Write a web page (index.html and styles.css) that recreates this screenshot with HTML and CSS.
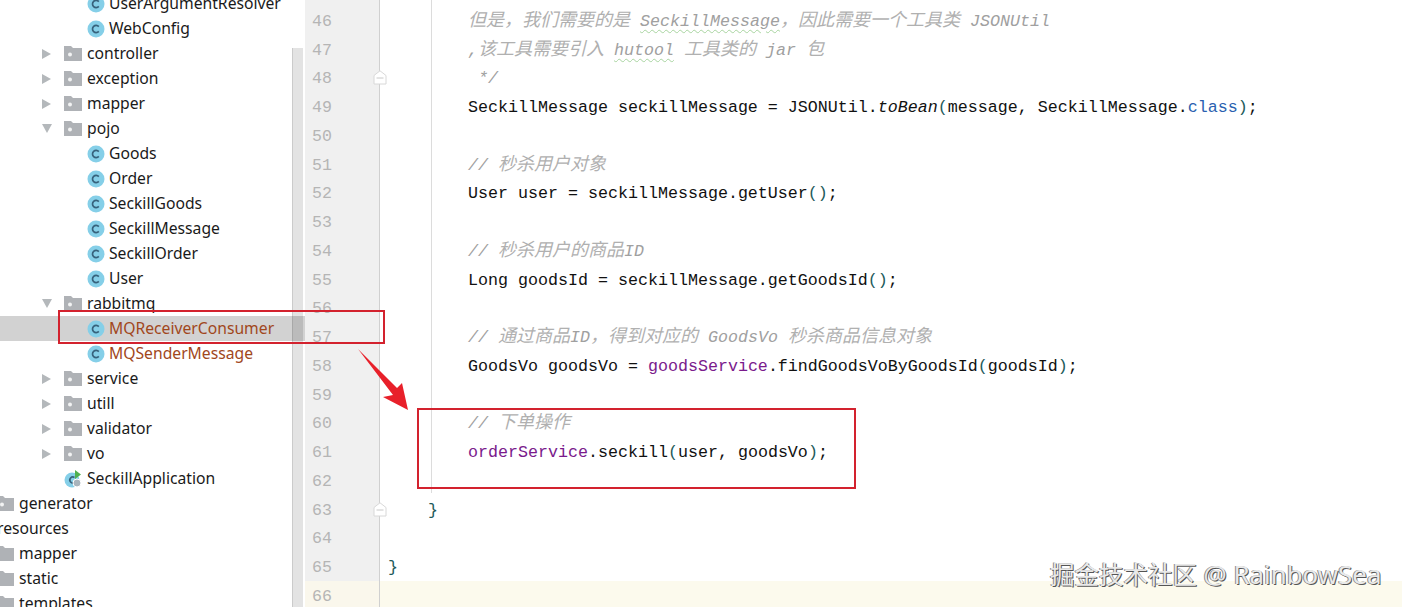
FILE: index.html
```html
<!DOCTYPE html>
<html lang="zh">
<head>
<meta charset="utf-8">
<title>Seckill</title>
<link rel="stylesheet" href="styles.css">
</head>
<body>
<svg class="defs" aria-hidden="true">
  <symbol id="i-cls" viewBox="0 0 18 18"><circle class="c-bg" cx="9" cy="9" r="8.500"/><path class="c-fg" d="M11.800 6.600A3.600 3.600 0 1 0 11.800 11.400"/></symbol>
  <symbol id="i-dir" viewBox="0 0 18 15"><path class="d-bg" d="M0 0h7l2 2h9v13H0z"/><circle class="d-fg" cx="6" cy="8.500" r="2"/></symbol>
  <symbol id="i-dir2" viewBox="0 0 18 15"><path class="d-bg" d="M0 0h7l2 2h9v13H0z"/></symbol>
</svg>
<div class="ide">
  <aside class="tree">
    <div class="tree-list">
      <div class="row d3"><svg class="cls"><use href="#i-cls"/></svg><span>UserArgumentResolver</span></div>
      <div class="row d3"><svg class="cls"><use href="#i-cls"/></svg><span>WebConfig</span></div>
      <div class="row d2"><i class="arrow"></i><svg class="dir"><use href="#i-dir"/></svg><span>controller</span></div>
      <div class="row d2"><i class="arrow"></i><svg class="dir"><use href="#i-dir"/></svg><span>exception</span></div>
      <div class="row d2"><i class="arrow"></i><svg class="dir"><use href="#i-dir"/></svg><span>mapper</span></div>
      <div class="row d2"><i class="arrow open"></i><svg class="dir"><use href="#i-dir"/></svg><span>pojo</span></div>
      <div class="row d3"><svg class="cls"><use href="#i-cls"/></svg><span>Goods</span></div>
      <div class="row d3"><svg class="cls"><use href="#i-cls"/></svg><span>Order</span></div>
      <div class="row d3"><svg class="cls"><use href="#i-cls"/></svg><span>SeckillGoods</span></div>
      <div class="row d3"><svg class="cls"><use href="#i-cls"/></svg><span>SeckillMessage</span></div>
      <div class="row d3"><svg class="cls"><use href="#i-cls"/></svg><span>SeckillOrder</span></div>
      <div class="row d3"><svg class="cls"><use href="#i-cls"/></svg><span>User</span></div>
      <div class="row d2"><i class="arrow open"></i><svg class="dir"><use href="#i-dir"/></svg><span>rabbitmq</span></div>
      <div class="row d3 sel mod"><svg class="cls"><use href="#i-cls"/></svg><span>MQReceiverConsumer</span></div>
      <div class="row d3 mod"><svg class="cls"><use href="#i-cls"/></svg><span>MQSenderMessage</span></div>
      <div class="row d2"><i class="arrow"></i><svg class="dir"><use href="#i-dir"/></svg><span>service</span></div>
      <div class="row d2"><i class="arrow"></i><svg class="dir"><use href="#i-dir"/></svg><span>utill</span></div>
      <div class="row d2"><i class="arrow"></i><svg class="dir"><use href="#i-dir"/></svg><span>validator</span></div>
      <div class="row d2"><i class="arrow"></i><svg class="dir"><use href="#i-dir"/></svg><span>vo</span></div>
      <div class="row d2b"><svg class="app" viewBox="0 0 18 18"><circle class="a1" cx="8" cy="10" r="7.500"/><path class="a2" d="M10.500 7.500A3 3 0 1 0 10.500 12.500"/><path class="a3" d="M11 0l6 4.500-6 4.500z"/><circle class="a4" cx="13" cy="13" r="4"/></svg><span>SeckillApplication</span></div>
      <div class="row d1"><svg class="dir"><use href="#i-dir"/></svg><span>generator</span></div>
      <div class="row d0"><span>resources</span></div>
      <div class="row d1"><svg class="dir"><use href="#i-dir2"/></svg><span>mapper</span></div>
      <div class="row d1"><svg class="dir"><use href="#i-dir2"/></svg><span>static</span></div>
      <div class="row d1"><svg class="dir"><use href="#i-dir2"/></svg><span>templates</span></div>
    </div>
    <div class="scrollbar"></div>
  </aside>
  <main class="editor">
    <div class="lines">
      <div class="ln"><span class="num">45</span><code class="code c8 cm"><span class="zh">获取到的是字符串类型的消息</span> String</code></div>
      <div class="ln"><span class="num">46</span><code class="code c8 cm"><span class="zh">但是，我们需要的是</span> <span class="typo">SeckillMessage</span><span class="zh">，因此需要一个工具类</span> JSONUtil</code></div>
      <div class="ln"><span class="num">47</span><code class="code c8 cm">,<span class="zh">该工具需要引入</span> <span class="typo">hutool</span> <span class="zh">工具类的</span> jar <span class="zh">包</span></code></div>
      <div class="ln"><span class="num">48</span><code class="code c8 cm"> */</code></div>
      <div class="ln"><span class="num">49</span><code class="code c8">SeckillMessage seckillMessage = JSONUtil.<em>toBean</em><span class="pr">(</span>message, SeckillMessage.<b class="kw">class</b><span class="pr">)</span>;</code></div>
      <div class="ln"><span class="num">50</span><code class="code"></code></div>
      <div class="ln"><span class="num">51</span><code class="code c8 cm">// <span class="zh">秒杀用户对象</span></code></div>
      <div class="ln"><span class="num">52</span><code class="code c8">User user = seckillMessage.getUser<span class="pr">()</span>;</code></div>
      <div class="ln"><span class="num">53</span><code class="code"></code></div>
      <div class="ln"><span class="num">54</span><code class="code c8 cm">// <span class="zh">秒杀用户的商品</span>ID</code></div>
      <div class="ln"><span class="num">55</span><code class="code c8">Long goodsId = seckillMessage.getGoodsId<span class="pr">()</span>;</code></div>
      <div class="ln"><span class="num">56</span><code class="code"></code></div>
      <div class="ln"><span class="num">57</span><code class="code c8 cm">// <span class="zh">通过商品</span>ID<span class="zh">，得到对应的</span> GoodsVo <span class="zh">秒杀商品信息对象</span></code></div>
      <div class="ln"><span class="num">58</span><code class="code c8">GoodsVo goodsVo = <span class="fld">goodsService</span>.findGoodsVoByGoodsId<span class="pr">(</span>goodsId<span class="pr">)</span>;</code></div>
      <div class="ln"><span class="num">59</span><code class="code"></code></div>
      <div class="ln"><span class="num">60</span><code class="code c8 cm">// <span class="zh">下单操作</span></code></div>
      <div class="ln"><span class="num">61</span><code class="code c8"><span class="fld">orderService</span>.seckill<span class="pr">(</span>user, goodsVo<span class="pr">)</span>;</code></div>
      <div class="ln"><span class="num">62</span><code class="code"></code></div>
      <div class="ln"><span class="num">63</span><code class="code c4 pr">}</code></div>
      <div class="ln"><span class="num">64</span><code class="code"></code></div>
      <div class="ln"><span class="num">65</span><code class="code pr">}</code></div>
      <div class="ln cur"><span class="num">66</span><code class="code"></code></div>
    </div>
  </main>
</div>
<div class="guide"></div>
<svg class="fold fold-a" viewBox="0 0 14 15"><path class="f-box" d="M1 5.500L7 .8l6 4.700V14H1z"/><path class="f-minus" d="M3.500 8h7"/></svg>
<svg class="fold fold-b" viewBox="0 0 14 15"><path class="f-box" d="M1 5.500L7 .8l6 4.700V14H1z"/><path class="f-minus" d="M3.500 8h7"/></svg>
<div class="mark mark-a"></div>
<div class="mark mark-b"></div>
<svg class="pointer" viewBox="0 0 52 62"><path d="M0 0L39 39L44 34L50 61L25 48L35 46z"/></svg>
<div class="wm">掘金技术社区 <span class="wm-latin">@ RainbowSea</span></div>
</body>
</html>
```
FILE: styles.css
```css
html,body{margin:0;padding:0;height:607px;overflow:hidden;background:#fff}
.defs{position:absolute;width:0;height:0}
.ide{display:flex;height:607px;overflow:hidden}
.tree{width:305px;flex:none;position:relative;overflow:hidden;font-family:"Noto Sans",sans-serif;font-size:15.7px;color:#1a1a1a}
.tree-list{margin-top:-9px}
.row{height:25px;display:flex;align-items:center;white-space:nowrap;box-sizing:border-box}
.row span{line-height:25px}
.d0{margin-left:-3px}
.d1{margin-left:-4px}
.d2{padding-left:42px}
.d2b{padding-left:64px}
.d3{padding-left:87px}
.arrow{width:0;height:0;border-style:solid;border-width:5px 0 5px 9px;border-color:transparent transparent transparent #b4b8bb;margin-right:13px}
.arrow.open{border-width:9px 5px 0 5px;border-color:#b4b8bb transparent transparent transparent;margin-right:12px}
.dir{width:18px;height:15px;margin-right:5px;flex:none}
.d-bg{fill:#afb2b6}
.d-fg{fill:#f2f3f3}
.cls{width:18px;height:18px;margin-right:4px;flex:none}
.c-bg{fill:#85cfe8}
.c-fg{fill:none;stroke:#37627c;stroke-width:1.700}
.app{width:18px;height:18px;margin-right:5px;flex:none}
.a1{fill:#85cfe8}
.a2{fill:none;stroke:#37627c;stroke-width:1.700}
.a3{fill:#4fb04f}
.a4{fill:#a9b4bc;stroke:#fff;stroke-width:1}
.sel{background:#d2d2d2}
.mod{color:#a1471c}
.scrollbar{position:absolute;left:292px;top:48px;width:11px;bottom:0;background:rgba(0,0,0,.11);border-left:1px solid rgba(0,0,0,.1);box-sizing:border-box}
.editor{flex:1;min-width:0;overflow:hidden;position:relative}
.lines{margin-top:-23px}
.ln{height:28.750px;display:flex}
.num{width:75px;flex:none;box-sizing:border-box;height:100%;padding:2px 0 0 7px;background:#f0f0f0;border-right:1px solid #d0d0d0;font:16.600px/28.750px "Liberation Mono",monospace;color:#b5b5b5;margin-right:8px}
.code{font:16.670px/28.750px "Liberation Mono","Noto Sans CJK SC",monospace;color:#111;white-space:pre;flex:1;box-sizing:border-box;height:100%;padding-top:2px}
.c4{padding-left:40px}
.c8{padding-left:80px}
.cm{color:#a0a0a0;font-style:italic}
.zh{font-size:18px;line-height:0;font-family:"Noto Sans CJK SC",sans-serif;color:#b0b0b0}
.kw{color:#2a5fb0;font-weight:400}
.pr{color:#1d5a5a}
.fld{color:#7a1a8c}
em{font-style:italic}
.typo{text-decoration:underline wavy #a8d4a0 1px;text-underline-offset:3px}
.cur{background:#fcfaed}
.cur .num{background:#faf7ec}
.guide{position:absolute;left:431px;top:0;width:1px;height:493px;background:#dcdcdc}
.fold{position:absolute;left:373px;width:14px;height:15px}
.f-box{fill:#fff;stroke:#d8d8d8;stroke-width:1}
.f-minus{stroke:#c8c8c8;stroke-width:1;fill:none}
.fold-a{top:70px}
.fold-b{top:502px}
.mark{position:absolute;border:2px solid #d3222e;box-sizing:border-box}
.mark-a{left:58px;top:310px;width:327px;height:34px}
.mark-b{left:417px;top:408px;width:439px;height:81px}
.pointer{position:absolute;left:358px;top:349px;width:52px;height:62px}
.pointer path{fill:#e8202a}
.wm{position:absolute;left:1050px;top:557px;font:24.500px/34px "Noto Sans","Noto Sans CJK SC",sans-serif;color:#e9e9e9;white-space:nowrap;text-shadow:1px 1px 0 #555,-1px 0 0 #888}
.wm-latin{font-size:25.900px}
```
